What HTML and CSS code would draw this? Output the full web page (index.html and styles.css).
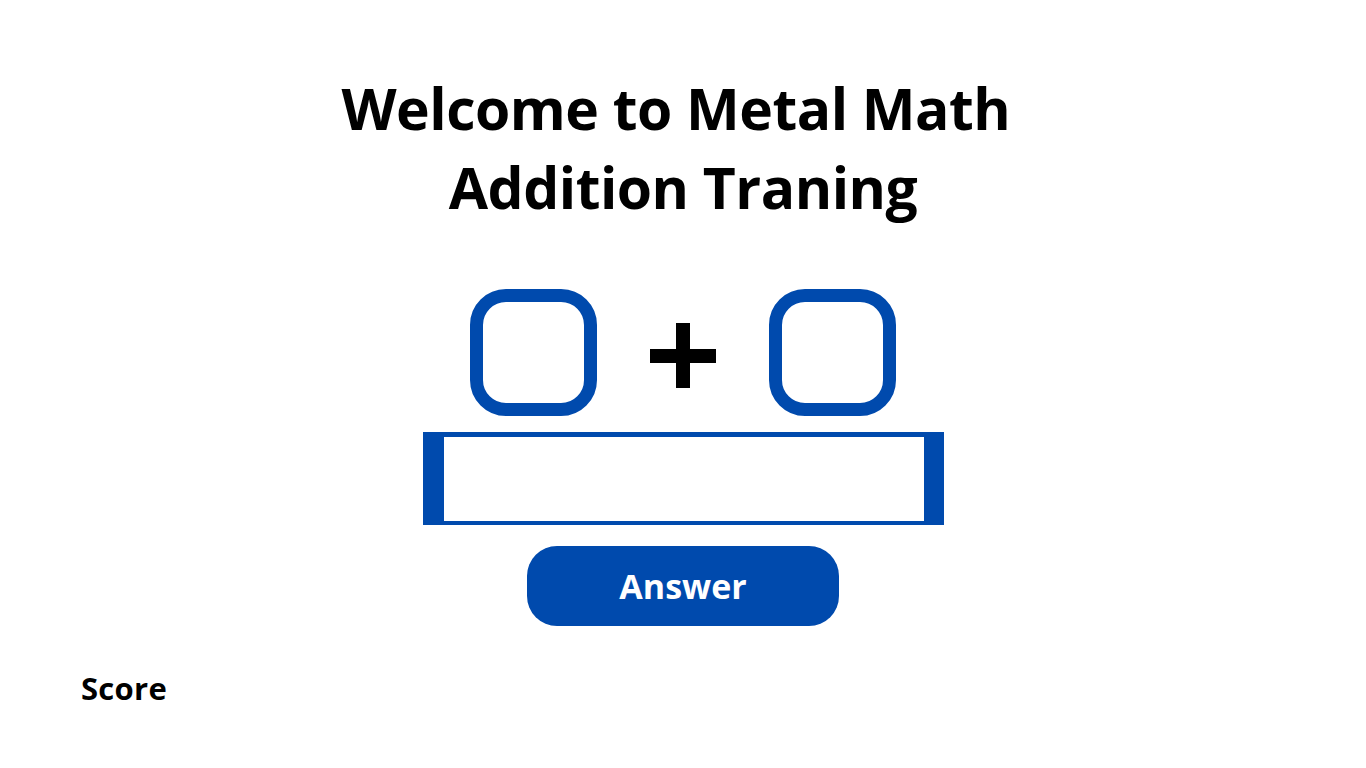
FILE: index.html
```html
<!DOCTYPE html>
<html lang="en">
<head>
<meta charset="utf-8">
<title>Metal Math</title>
<link rel="stylesheet" href="styles.css">
</head>
<body>
<main class="page">
  <h1 class="title">Welcome to Metal Math&nbsp;<br>Addition Traning</h1>
  <div class="problem">
    <div class="num-box"></div>
    <svg class="plus" width="66" height="65" viewBox="0 0 66 65" aria-label="plus">
      <rect x="26" y="0" width="14" height="65" fill="#000"/>
      <rect x="0" y="26" width="66" height="14" fill="#000"/>
    </svg>
    <div class="num-box"></div>
  </div>
  <input class="answer-input" type="text" aria-label="answer">
  <button class="answer-btn" type="button">Answer</button>
  <div class="score">Score</div>
</main>
</body>
</html>
```

FILE: styles.css
```css
html, body {
  margin: 0;
  padding: 0;
  background: #ffffff;
}

body {
  font-family: "Open Sans", "Liberation Sans", sans-serif;
  color: #000;
  width: 1366px;
  height: 768px;
  overflow: hidden;
}

.page {
  display: flex;
  flex-direction: column;
  align-items: center;
  padding-top: 69px;
  height: 768px;
  box-sizing: border-box;
  position: relative;
}

.title {
  margin: 0;
  font-size: 57px;
  line-height: 79px;
  font-weight: 700;
  letter-spacing: -0.5px;
  text-align: center;
}

.problem {
  display: flex;
  align-items: center;
  gap: 53px;
  margin-top: 62px;
}

.num-box {
  width: 127px;
  height: 127px;
  box-sizing: border-box;
  border: 13px solid #004aad;
  border-radius: 36px;
}

.plus {
  display: block;
  margin-top: 6px;
}

.answer-input {
  display: block;
  margin-top: 16px;
  width: 521px;
  height: 93px;
  box-sizing: border-box;
  border-style: solid;
  border-color: #004aad;
  border-width: 5px 20px 4px 21px;
  background: #fff;
  padding: 0;
  outline: none;
  font-family: inherit;
}

.answer-btn {
  margin-top: 21px;
  width: 312px;
  height: 80px;
  border: none;
  border-radius: 30px;
  background: #004aad;
  color: #fff;
  font-family: "Open Sans", "Liberation Sans", sans-serif;
  font-weight: 700;
  font-size: 34px;
  padding: 0;
  cursor: pointer;
}

.score {
  align-self: flex-start;
  margin-left: 81px;
  margin-top: 42px;
  font-size: 31px;
  font-weight: 700;
  letter-spacing: 0.3px;
  line-height: 40px;
}
```
